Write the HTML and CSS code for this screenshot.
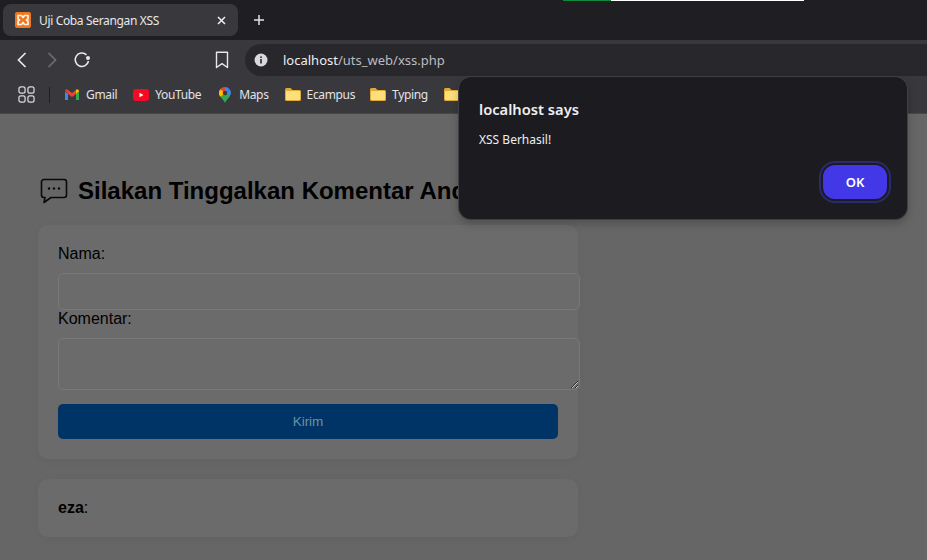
FILE: index.html
```html
<!DOCTYPE html>
<html lang="id">
  <head>
    <meta charset="UTF-8" />
    <meta name="viewport" content="width=device-width, initial-scale=1.0" />
    <title>Uji Coba Serangan XSS</title>
    <link rel="stylesheet" href="styles.css">
  </head>
  <body>
    <div class="loading-line"></div>

    <div class="tabstrip">
      <div class="tab">
        <svg class="favicon" viewBox="0 0 16 16">
          <rect width="16" height="16" rx="2" fill="#f0771f" />
          <path d="M3 3.500h3.500L8 5.500l1.500-2H13v3.300L11.500 8 13 9.200v3.300H9.500L8 10.500l-1.500 2H3V9.200L4.500 8 3 6.800z" fill="none" stroke="#fff3e6" stroke-width="1.700" stroke-linejoin="round" />
        </svg>
        <span class="tab-title">Uji Coba Serangan XSS</span>
        <svg class="tab-close" viewBox="0 0 9 9">
          <path d="M1 1l7 7M8 1L1 8" stroke="#f0f0f2" stroke-width="1.500" />
        </svg>
      </div>
      <svg class="new-tab" viewBox="0 0 12 12">
        <path d="M6 1v10M1 6h10" stroke="#e3e3e6" stroke-width="1.500" />
      </svg>
    </div>

    <div class="toolbar">
      <svg class="nav-icon" viewBox="0 0 20 20">
        <path d="M13.500 3l-7 7 7 7" fill="none" stroke="#e8e8ea" stroke-width="1.700" />
      </svg>
      <svg class="nav-icon" viewBox="0 0 20 20">
        <path d="M6.500 3l7 7-7 7" fill="none" stroke="#6f6f74" stroke-width="1.700" />
      </svg>
      <svg class="nav-icon" viewBox="0 0 20 20">
        <path d="M16.500 11a6.700 6.700 0 1 1-2-6.200" fill="none" stroke="#e8e8ea" stroke-width="1.600" />
        <circle cx="16" cy="8" r="2" fill="#e8e8ea" />
      </svg>
      <svg class="bookmark-icon" viewBox="0 0 14 18">
        <path d="M1.500 1.200h11v15.300L7 12.600l-5.500 3.900z" fill="none" stroke="#e8e8ea" stroke-width="1.400" stroke-linejoin="round" />
      </svg>
      <div class="omnibox">
        <svg class="info-icon" viewBox="0 0 14 14">
          <circle cx="7" cy="7" r="6.500" fill="#d9d9dc" />
          <rect x="6.200" y="6" width="1.600" height="4.500" fill="#27272c" />
          <rect x="6.200" y="3.400" width="1.600" height="1.600" fill="#27272c" />
        </svg>
        <span class="url"><span class="url-host">localhost</span>/uts_web/xss.php</span>
      </div>
    </div>

    <div class="bookmarks">
      <svg class="apps-icon" viewBox="0 0 18 18">
        <rect x="1" y="1" width="6.500" height="6.500" rx="2" fill="none" stroke="#dcdcdf" stroke-width="1.300" />
        <rect x="10.500" y="1" width="6.500" height="6.500" rx="2" fill="none" stroke="#dcdcdf" stroke-width="1.300" />
        <rect x="1" y="10.500" width="6.500" height="6.500" rx="2" fill="none" stroke="#dcdcdf" stroke-width="1.300" />
        <rect x="10.500" y="10.500" width="6.500" height="6.500" rx="2" fill="none" stroke="#dcdcdf" stroke-width="1.300" />
      </svg>
      <div class="bm-divider"></div>
      <div class="bm">
        <svg class="bm-icon" viewBox="0 0 14 11">
          <path d="M0 2.500V11h3V5z" fill="#4285f4" />
          <path d="M11 5v6h3V2.500z" fill="#34a853" />
          <path d="M0 1.500L3 5l4 3 4-3 3-3.500C13 0 12 0 11 1L7 4 3 1C2 0 1 0 0 1.500z" fill="#ea4335" />
          <path d="M11 1v4l3-2.500C14 1 12.500 0 11 1z" fill="#fbbc04" />
        </svg>
        Gmail
      </div>
      <div class="bm bm-video">
        <svg class="bm-icon bm-yt" viewBox="0 0 16 12">
          <rect width="16" height="12" rx="3" fill="#f40b23" />
          <path d="M6.500 3.700v4.600L10.500 6z" fill="#fff" />
        </svg>
        YouTube
      </div>
      <div class="bm">
        <svg class="bm-icon bm-maps" viewBox="0 0 12 16">
          <path d="M6 0a6 6 0 0 0-4.600 9.800L6 4.500z" fill="#ea4335" />
          <path d="M6 0a6 6 0 0 1 4.600 2.200L6 6z" fill="#4285f4" />
          <path d="M10.600 2.200a6 6 0 0 1 0 7.300L6 6z" fill="#4285f4" />
          <path d="M1.400 9.800L8 3.500l2.600 6C9 12 7 13.500 6 16 5 13.500 3 12 1.400 9.800z" fill="#34a853" />
          <path d="M1.400 2.200L6 6 1.400 9.800a6 6 0 0 1 0-7.600z" fill="#fbbc04" />
          <circle cx="6" cy="6" r="2.200" fill="#3a3a3f" />
        </svg>
        Maps
      </div>
      <div class="bm bm-wide">
        <svg class="bm-icon bm-folder" viewBox="0 0 16 13">
          <path d="M0 1.500A1.500 1.500 0 0 1 1.500 0h4l2 2h7A1.500 1.500 0 0 1 16 3.500v8a1.500 1.500 0 0 1-1.500 1.500h-13A1.500 1.500 0 0 1 0 11.500z" fill="#e0aa35" />
          <rect x="1" y="3" width="14" height="9" rx="1" fill="#fddf7c" />
        </svg>
        Ecampus
      </div>
      <div class="bm">
        <svg class="bm-icon bm-folder" viewBox="0 0 16 13">
          <path d="M0 1.500A1.500 1.500 0 0 1 1.500 0h4l2 2h7A1.500 1.500 0 0 1 16 3.500v8a1.500 1.500 0 0 1-1.500 1.500h-13A1.500 1.500 0 0 1 0 11.500z" fill="#e0aa35" />
          <rect x="1" y="3" width="14" height="9" rx="1" fill="#fddf7c" />
        </svg>
        Typing
      </div>
      <div class="bm">
        <svg class="bm-icon bm-folder" viewBox="0 0 16 13">
          <path d="M0 1.500A1.500 1.500 0 0 1 1.500 0h4l2 2h7A1.500 1.500 0 0 1 16 3.500v8a1.500 1.500 0 0 1-1.500 1.500h-13A1.500 1.500 0 0 1 0 11.500z" fill="#e0aa35" />
          <rect x="1" y="3" width="14" height="9" rx="1" fill="#fddf7c" />
        </svg>
      </div>
    </div>

    <div class="page">
      <h2>
        <svg class="comment-icon" viewBox="0 0 28 26">
          <path d="M4 1.500h20a2.500 2.500 0 0 1 2.500 2.500v13a2.500 2.500 0 0 1-2.500 2.500H11l-7 5 1-5H4A2.500 2.500 0 0 1 1.500 17V4A2.500 2.500 0 0 1 4 1.500z" fill="none" stroke="#0a0a0a" stroke-width="1.600" stroke-linejoin="round" />
          <circle cx="9" cy="10.500" r="1.200" fill="#0a0a0a" />
          <circle cx="14" cy="10.500" r="1.200" fill="#0a0a0a" />
          <circle cx="19" cy="10.500" r="1.200" fill="#0a0a0a" />
        </svg>
        Silakan Tinggalkan Komentar Anda
      </h2>

      <form class="card">
        <label for="nama">Nama:</label>
        <input type="text" id="nama" />
        <label for="komentar">Komentar:</label>
        <textarea id="komentar"></textarea>
        <button type="button" class="submit">Kirim</button>
      </form>

      <div class="card comment">
        <p><strong>eza</strong>:</p>
      </div>
    </div>

    <div class="dialog">
      <div class="dialog-title">localhost says</div>
      <div class="dialog-text">XSS Berhasil!</div>
      <div class="dialog-actions">
        <button class="ok">OK</button>
      </div>
    </div>
  </body>
</html>
```

FILE: styles.css
```css
html,
body {
  height: 100%;
}
body {
  margin: 0;
  height: 560px;
  overflow: hidden;
  background-color: #666666;
  font-family: "Noto Sans", "Open Sans", sans-serif;
  position: relative;
}
.loading-line {
  position: absolute;
  top: 0;
  left: 563px;
  width: 241px;
  height: 1px;
  background: linear-gradient(to right, #0b8a3c 48px, #ffffff 48px);
}
.tabstrip {
  height: 40px;
  background-color: #1e1e23;
  display: flex;
  align-items: center;
  box-sizing: border-box;
  padding: 0 0 0 3px;
}
.tab {
  width: 235px;
  height: 32px;
  box-sizing: border-box;
  background-color: #38383d;
  border-radius: 8px;
  display: flex;
  align-items: center;
  padding: 0 12px;
  color: #e8e8ea;
  font-size: 12px;
  letter-spacing: -0.35px;
}
.favicon {
  width: 16px;
  height: 16px;
  margin-right: 8px;
}
.tab-title {
  flex: 1;
}
.tab-close {
  width: 9px;
  height: 9px;
}
.new-tab {
  width: 12px;
  height: 12px;
  margin-left: 15px;
}
.toolbar {
  height: 36px;
  box-sizing: border-box;
  padding: 4px 0 0 12px;
  background-color: #38383d;
  display: flex;
  align-items: center;
}
.nav-icon {
  width: 20px;
  height: 20px;
  margin-right: 10px;
}
.bookmark-icon {
  width: 14px;
  height: 18px;
  margin-left: 113px;
  margin-right: 16px;
}
.omnibox {
  flex: 1;
  height: 32px;
  background-color: #27272c;
  border-radius: 16px 0 0 16px;
  display: flex;
  align-items: center;
  padding-left: 9px;
}
.info-icon {
  width: 14px;
  height: 14px;
  margin-right: 15px;
}
.url {
  font-size: 13px;
  color: #bcbcc0;
}
.url-host {
  color: #eeeef0;
}
.bookmarks {
  height: 38px;
  box-sizing: border-box;
  padding: 0 0 0 18px;
  background-color: #38383d;
  border-bottom: 1px solid #47474c;
  display: flex;
  align-items: center;
  color: #e3e3e6;
  font-size: 12px;
  letter-spacing: -0.35px;
}
.apps-icon {
  width: 17px;
  height: 17px;
}
.bm-divider {
  width: 1px;
  height: 16px;
  background-color: #1e1e23;
  margin: 0 15px 0 14px;
}
.bm {
  display: flex;
  align-items: center;
  margin-right: 16px;
}
.bm-video {
  margin-right: 18px;
}
.bm-wide {
  margin-right: 15px;
}
.bm-icon {
  width: 14px;
  height: 11px;
  margin-right: 7px;
}
.bm-yt {
  width: 16px;
  height: 12px;
  margin-right: 6px;
}
.bm-maps {
  width: 12px;
  height: 16px;
  margin-right: 8px;
}
.bm-folder {
  width: 16px;
  height: 13px;
  margin-right: 6px;
}
.page {
  padding: 58px 0 0 38px;
  color: #000000;
  font-family: "Liberation Sans", Arial, sans-serif;
}
h2 {
  margin: 0 0 16px;
  height: 37px;
  font-size: 24px;
  line-height: 37px;
  white-space: nowrap;
  display: flex;
  align-items: center;
  overflow: hidden;
}
.comment-icon {
  width: 28px;
  height: 26px;
  margin: 0 10px 0 2px;
}
.card {
  display: block;
  width: 500px;
  padding: 20px;
  background-color: #6b6b6b;
  border-radius: 10px;
  box-shadow: 0 2px 8px rgba(0, 0, 0, 0.04);
}
label {
  display: block;
  font-size: 16px;
  line-height: 18px;
  margin-bottom: 10px;
}
#nama,
#komentar {
  display: block;
  width: 522px;
  box-sizing: border-box;
  background-color: #6b6b6b;
  border: 1px solid #787878;
  border-radius: 5px;
  margin: 0;
}
#nama {
  height: 37px;
  margin-bottom: 0;
}
#komentar {
  height: 52px;
  margin-bottom: 14px;
}
.submit {
  display: block;
  width: 500px;
  height: 35px;
  background-color: #003366;
  color: #6a93a2;
  border: none;
  border-radius: 5px;
  font-family: "Liberation Sans", Arial, sans-serif;
  font-size: 13.500px;
}
.comment {
  margin-top: 20px;
  height: 18px;
}
.comment p {
  margin: 0;
  font-size: 16px;
  line-height: 18px;
}
.dialog {
  position: absolute;
  top: 77px;
  left: 459px;
  width: 448px;
  height: 142px;
  box-sizing: border-box;
  padding: 22px 20px 0;
  background-color: #1b1b20;
  border-radius: 12px;
  box-shadow: 0 0 0 1px #3f3f44, 0 4px 10px rgba(0, 0, 0, 0.25);
  color: #eeeef0;
}
.dialog-title {
  font-size: 14.700px;
  font-weight: 600;
  line-height: 20px;
}
.dialog-text {
  font-size: 12px;
  line-height: 16px;
  margin-top: 13px;
}
.dialog-actions {
  display: flex;
  justify-content: flex-end;
  margin-top: 15px;
}
.ok {
  width: 64px;
  height: 34px;
  background-color: #4338e8;
  color: #ffffff;
  border: 2px solid #1b1b20;
  box-sizing: content-box;
  border-radius: 14px;
  box-shadow: 0 0 0 2px #2a2a70;
  font-family: "Noto Sans", "Open Sans", sans-serif;
  font-size: 13px;
  font-weight: 600;
  padding: 0;
  margin-right: -2px;
}
```
